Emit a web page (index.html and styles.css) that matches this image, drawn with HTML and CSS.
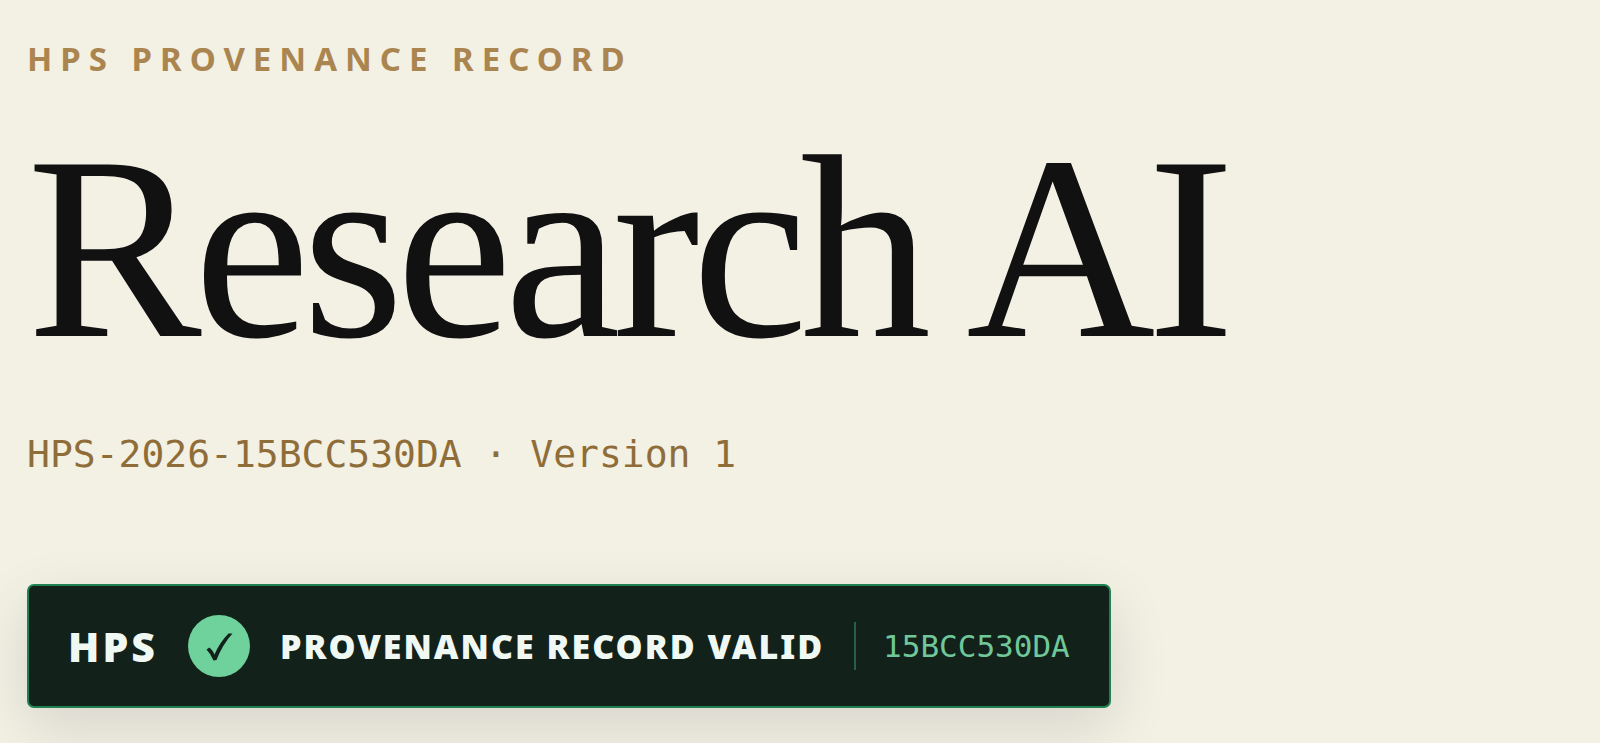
FILE: index.html
```html
<!DOCTYPE html>
<html lang="en">
<head>
<meta charset="utf-8">
<meta name="viewport" content="width=device-width, initial-scale=1">
<title>Research AI – HPS Provenance Record</title>
<link rel="stylesheet" href="styles.css">
</head>
<body>
<main class="record">
  <p class="kicker">HPS PROVENANCE RECORD</p>
  <h1 class="title">Research AI</h1>
  <p class="meta">HPS-2026-15BCC530DA · Version 1</p>
  <div class="badge">
    <span class="badge-brand">HPS</span>
    <span class="badge-check">
      <svg viewBox="0 0 62 62" aria-hidden="true"><path d="M18.500 34.500L21.500 32.500Q24.500 35 26.500 39.500Q32 27 40.500 18.500L44.500 18.500Q34.500 29.500 28.500 45L25.500 45.500Q22.500 38.500 18.500 34.500Z"/></svg>
    </span>
    <span class="badge-label">PROVENANCE RECORD VALID</span>
    <span class="badge-code">15BCC530DA</span>
  </div>
</main>
</body>
</html>
```
FILE: styles.css
```css
* {
  box-sizing: border-box;
}

body {
  margin: 0;
  background: #f3f0e4;
  color: #111111;
  font-family: "Noto Sans", "Open Sans", sans-serif;
}

.record {
  display: flex;
  flex-direction: column;
  align-items: flex-start;
  padding: 36px 27px;
}

.kicker {
  margin: 0;
  color: #ab8550;
  font-size: 33px;
  font-weight: 700;
  line-height: 46px;
  letter-spacing: 8px;
}

.title {
  margin: 36px 0 0;
  font-family: "Liberation Serif", serif;
  font-size: 262px;
  font-weight: 400;
  line-height: 260px;
  letter-spacing: -8px;
}

.meta {
  margin: 52px 0 0;
  color: #8f6d38;
  font-family: "DejaVu Sans Mono", monospace;
  font-size: 38px;
  line-height: 48px;
}

.badge {
  display: flex;
  align-items: center;
  gap: 30px;
  margin-top: 106px;
  padding: 29px 39px;
  border: 2px solid #218052;
  border-radius: 7px;
  background: #12211a;
  box-shadow: 0 20px 60px rgba(17, 17, 34, 0.12);
  color: #f0f8f4;
  line-height: 48px;
  white-space: nowrap;
}

.badge-brand {
  font-size: 41px;
  font-weight: 900;
  letter-spacing: 3px;
}

.badge-check {
  width: 62px;
  height: 62px;
  border-radius: 50%;
  background: #6fd19b;
}

.badge-check svg {
  display: block;
  fill: #12211a;
}

.badge-label {
  font-size: 34px;
  font-weight: 900;
  letter-spacing: 2px;
}

.badge-code {
  padding-left: 27px;
  border-left: 2px solid #285f48;
  color: #6fc79a;
  font-family: "DejaVu Sans Mono", monospace;
  font-size: 31px;
}
```
